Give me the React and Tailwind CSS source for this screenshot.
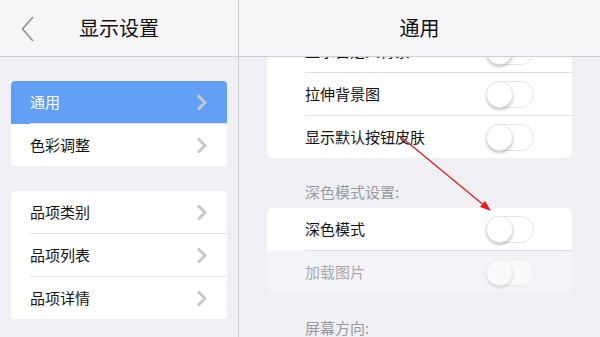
import React from "react";

const font = { fontFamily: '"Noto Sans CJK SC", "Noto Sans", sans-serif' };

function Chevron({ className = "" }) {
  return (
    <svg width="10" height="15" viewBox="0 0 10 15" className={className}>
      <path d="M2 1.5 L8 7.5 L2 13.5" fill="none" stroke="#c7c7cc" strokeWidth="3" strokeLinecap="square" strokeLinejoin="miter" />
    </svg>
  );
}

function Toggle({ dim }) {
  return (
    <div className={`relative w-[48px] h-[27px] rounded-full border border-[#e3e3e6] bg-white ${dim ? "opacity-50" : ""}`}>
      <div className="absolute left-[-1px] top-[-1px] w-[27px] h-[27px] rounded-full bg-white border border-[#e6e6e8] shadow-[0_2px_3px_rgba(0,0,0,0.22)]" />
    </div>
  );
}

function LeftRow({ label, active, last, first }) {
  return (
    <div className={`flex flex-col ${active ? "bg-[#62a0f6]" : ""} ${first ? "rounded-t-[4px]" : ""}`}>
      <div className="h-[42px] flex items-center pl-[19px] pr-[20px]">
        <span className={`flex-1 text-[15px] ${active ? "text-white" : "text-[#111]"}`}>{label}</span>
        <Chevron />
      </div>
      {!last && <div className="h-px ml-[19px] bg-[#e1e1e3]" />}
    </div>
  );
}

function RightRow({ label, last, disabled }) {
  return (
    <div className={`flex flex-col ${disabled ? "bg-[#f4f4f8]" : ""}`}>
      <div className="h-[42px] flex items-center pl-[38px] pr-[38px]">
        <span className={`flex-1 text-[15px] ${disabled ? "text-[#a9a9ad]" : "text-[#111]"}`}>{label}</span>
        <Toggle dim={disabled} />
      </div>
      {!last && <div className="h-px ml-[38px] bg-[#dedee1]" />}
    </div>
  );
}

export default function App() {
  return (
    <div style={font} className="relative w-[600px] h-[337px] overflow-hidden flex bg-[#efeff4]">
      {/* Left panel */}
      <div className="w-[239px] flex flex-col border-r border-[#cfcfd3] bg-[#efeff4]">
        <div className="h-[57px] shrink-0 flex items-center relative bg-[#f6f6f8] border-b border-[#cfcfd3]">
          <svg width="14" height="26" viewBox="0 0 14 26" className="absolute left-[21px] top-[16px]">
            <path d="M12 1 L1.5 13 L12 25" fill="none" stroke="#8e8e93" strokeWidth="1.6" />
          </svg>
          <div className="flex-1 text-center text-[20px] text-[#111]">显示设置</div>
        </div>
        <div className="flex flex-col gap-[25px] px-[11px] pt-[24px]">
          <div className="bg-white rounded-[4px] flex flex-col">
            <LeftRow label="通用" active first />
            <LeftRow label="色彩调整" last />
          </div>
          <div className="bg-white rounded-[4px] flex flex-col">
            <LeftRow label="品项类别" />
            <LeftRow label="品项列表" />
            <LeftRow label="品项详情" last />
          </div>
        </div>
      </div>

      {/* Right panel */}
      <div className="flex-1 flex flex-col">
        <div className="h-[57px] shrink-0 flex items-center justify-center bg-[#f6f6f8] border-b border-[#cfcfd3]">
          <span className="text-[20px] text-[#111]">通用</span>
        </div>
        <div className="flex-1 overflow-hidden">
          <div className="-mt-[27px] px-[28px] flex flex-col">
            <div className="bg-white rounded-[6px] flex flex-col">
              <RightRow label="显示自定义背景" />
              <RightRow label="拉伸背景图" />
              <RightRow label="显示默认按钮皮肤" last />
            </div>
            <div className="h-[50px] flex items-end pb-[5px] pl-[38px] text-[15px] text-[#9a9a9e]">深色模式设置:</div>
            <div className="bg-white rounded-[6px] overflow-hidden flex flex-col">
              <RightRow label="深色模式" />
              <RightRow label="加载图片" last disabled />
            </div>
            <div className="h-[46px] flex items-end pl-[38px] text-[15px] text-[#9a9a9e]">屏幕方向:</div>
          </div>
        </div>
      </div>

      {/* Annotation arrow */}
      <svg className="absolute left-0 top-0 pointer-events-none" width="600" height="337">
        <line x1="400" y1="136" x2="486" y2="207" stroke="#e31b1b" strokeWidth="1.3" />
        <polygon points="491,211 480,207 485,201" fill="#e31b1b" />
      </svg>
    </div>
  );
}
